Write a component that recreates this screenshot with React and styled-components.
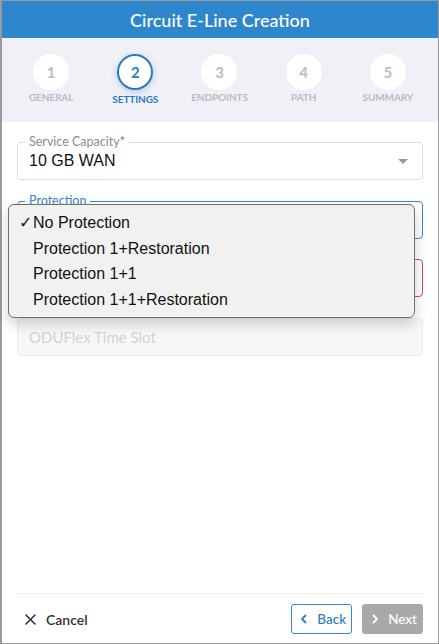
import React from "react";
import styled, { createGlobalStyle } from "styled-components";

const GlobalStyle = createGlobalStyle`
  * { box-sizing: border-box; }
  body {
    margin: 0;
    background: #ffffff;
    font-family: "Lato", "Noto Sans", sans-serif;
  }
`;

const steps = [
  { n: 1, label: "General" },
  { n: 2, label: "Settings", active: true },
  { n: 3, label: "Endpoints" },
  { n: 4, label: "Path" },
  { n: 5, label: "Summary" },
];

const options = [
  { label: "No Protection", checked: true },
  { label: "Protection 1+Restoration" },
  { label: "Protection 1+1" },
  { label: "Protection 1+1+Restoration" },
];

const ChevronLeft = () => (
  <svg width="10" height="10" viewBox="0 0 10 10" fill="none">
    <path d="M6.5 1.5L3 5l3.5 3.5" stroke="currentColor" strokeWidth="1.8" strokeLinecap="round" strokeLinejoin="round" />
  </svg>
);

const ChevronRight = () => (
  <svg width="10" height="10" viewBox="0 0 10 10" fill="none">
    <path d="M3.5 1.5L7 5 3.5 8.5" stroke="currentColor" strokeWidth="1.8" strokeLinecap="round" strokeLinejoin="round" />
  </svg>
);

const CloseIcon = () => (
  <svg width="11" height="11" viewBox="0 0 11 11" fill="none">
    <path d="M1 1l9 9M10 1l-9 9" stroke="currentColor" strokeWidth="1.6" strokeLinecap="round" />
  </svg>
);

export default function App() {
  return (
    <>
      <GlobalStyle />
      <Dialog>
        <Header>Circuit E-Line Creation</Header>
        <Stepper>
          {steps.map((s) => (
            <Step key={s.n}>
              <Circle $active={s.active}>{s.n}</Circle>
              <StepLabel $active={s.active}>{s.label}</StepLabel>
            </Step>
          ))}
        </Stepper>
        <Body>
          <Field>
            <FieldLabel>
              Service Capacity<Required>*</Required>
            </FieldLabel>
            <Value>10 GB WAN</Value>
            <Caret />
          </Field>
          <Field $focused>
            <FieldLabel $focused>Protection</FieldLabel>
          </Field>
          <Field $error />
          <Field $disabled>
            <Placeholder>ODUFlex Time Slot</Placeholder>
          </Field>
          <Menu>
            {options.map((o) => (
              <MenuItem key={o.label}>
                <Check>{o.checked ? "✓" : ""}</Check>
                {o.label}
              </MenuItem>
            ))}
          </Menu>
        </Body>
        <Footer>
          <CancelButton>
            <CloseIcon />
            Cancel
          </CancelButton>
          <Actions>
            <NavButton $variant="outline">
              <ChevronLeft />
              Back
            </NavButton>
            <NavButton $variant="disabled">
              <ChevronRight />
              Next
            </NavButton>
          </Actions>
        </Footer>
      </Dialog>
    </>
  );
}

const Dialog = styled.div`
  width: 439px;
  height: 644px;
  display: flex;
  flex-direction: column;
  border: 1px solid #9a9a9a;
  border-left-width: 2px;
  background: #ffffff;
`;

const Header = styled.div`
  height: 37px;
  display: flex;
  align-items: center;
  justify-content: center;
  background: #2e86cc;
  color: #ffffff;
  font-size: 18px;
  font-weight: 500;
`;

const Stepper = styled.div`
  height: 84px;
  display: grid;
  grid-template-columns: repeat(5, 1fr);
  padding: 16px 8px 0 7px;
  background: #f0f0f6;
`;

const Step = styled.div`
  display: flex;
  flex-direction: column;
  align-items: center;
`;

const Circle = styled.div`
  width: 36px;
  height: 36px;
  border-radius: 50%;
  display: flex;
  align-items: center;
  justify-content: center;
  background: #ffffff;
  border: 2px solid ${(p) => (p.$active ? "#2e7bc4" : "#ffffff")};
  box-shadow: ${(p) => (p.$active ? "0 2px 6px rgba(46, 123, 196, 0.3)" : "none")};
  color: ${(p) => (p.$active ? "#2e7bc4" : "#b9bcc7")};
  font-size: 15px;
  font-weight: 700;
`;

const StepLabel = styled.div`
  margin-top: ${(p) => (p.$active ? "3px" : "1px")};
  color: ${(p) => (p.$active ? "#2e7bc4" : "#b9bcc7")};
  font-size: 10px;
  font-weight: 700;
  text-transform: uppercase;
  letter-spacing: -0.1px;
`;

const Body = styled.div`
  position: relative;
  flex: 1;
  display: flex;
  flex-direction: column;
  gap: 20.5px;
  padding: 20px 15px 0 15px;
`;

const Field = styled.div`
  position: relative;
  height: 38px;
  display: flex;
  align-items: center;
  padding: 0 11px;
  border-radius: 4px;
  border: 1px solid
    ${(p) =>
      p.$focused ? "#3a86cc" : p.$error ? "#d8475f" : p.$disabled ? "#ececec" : "#dddddd"};
  background: ${(p) => (p.$disabled ? "#f7f7f7" : "#ffffff")};
`;

const FieldLabel = styled.span`
  position: absolute;
  left: 7px;
  top: -9px;
  padding: 0 4px;
  background: #ffffff;
  color: ${(p) => (p.$focused ? "#3a86cc" : "#8c8c8c")};
  font-size: 12.5px;
  line-height: 16px;
`;

const Required = styled.span`
  color: #d8475f;
`;

const Value = styled.span`
  font-family: "Liberation Sans", Arial, sans-serif;
  font-size: 16px;
  color: #111111;
`;

const Caret = styled.span`
  margin-left: auto;
  margin-right: 3px;
  width: 0;
  height: 0;
  border-left: 5px solid transparent;
  border-right: 5px solid transparent;
  border-top: 5px solid #9a9a9a;
`;

const Placeholder = styled.span`
  color: #d2d2d2;
  font-size: 15px;
`;

const Menu = styled.ul`
  position: absolute;
  left: 6px;
  top: 82px;
  width: 407px;
  margin: 0;
  padding: 5px 0 4px;
  list-style: none;
  background: #f1f1f1;
  border: 1px solid #6f6f6f;
  border-radius: 6px;
  box-shadow: 0 6px 14px rgba(0, 0, 0, 0.18);
`;

const MenuItem = styled.li`
  display: flex;
  align-items: center;
  height: 25.7px;
  padding-left: 10px;
  font-family: "Liberation Sans", Arial, sans-serif;
  font-size: 16px;
  color: #111111;
`;

const Check = styled.span`
  width: 14px;
  font-family: "DejaVu Sans", sans-serif;
  font-size: 16px;
`;

const Footer = styled.div`
  display: flex;
  align-items: center;
  justify-content: space-between;
  margin: 0 15px;
  padding: 10px 0 9px;
  border-top: 1px solid #ececec;
`;

const CancelButton = styled.button`
  display: flex;
  align-items: center;
  gap: 10px;
  padding: 0 0 0 8px;
  border: none;
  background: none;
  color: #333333;
  font-family: "Lato", sans-serif;
  font-size: 14px;
  font-weight: 600;
`;

const Actions = styled.div`
  display: flex;
  gap: 10px;
`;

const NavButton = styled.button`
  height: 30px;
  display: flex;
  align-items: center;
  gap: 8px;
  padding: 0 5px 0 7px;
  border-radius: 3px;
  font-family: "Lato", sans-serif;
  font-size: 13.5px;
  font-weight: 500;
  border: 1px solid ${(p) => (p.$variant === "outline" ? "#3a86cc" : "#a9a9a9")};
  background: ${(p) => (p.$variant === "outline" ? "#ffffff" : "#a9a9a9")};
  color: ${(p) => (p.$variant === "outline" ? "#2e7bc4" : "#ffffff")};
`;
